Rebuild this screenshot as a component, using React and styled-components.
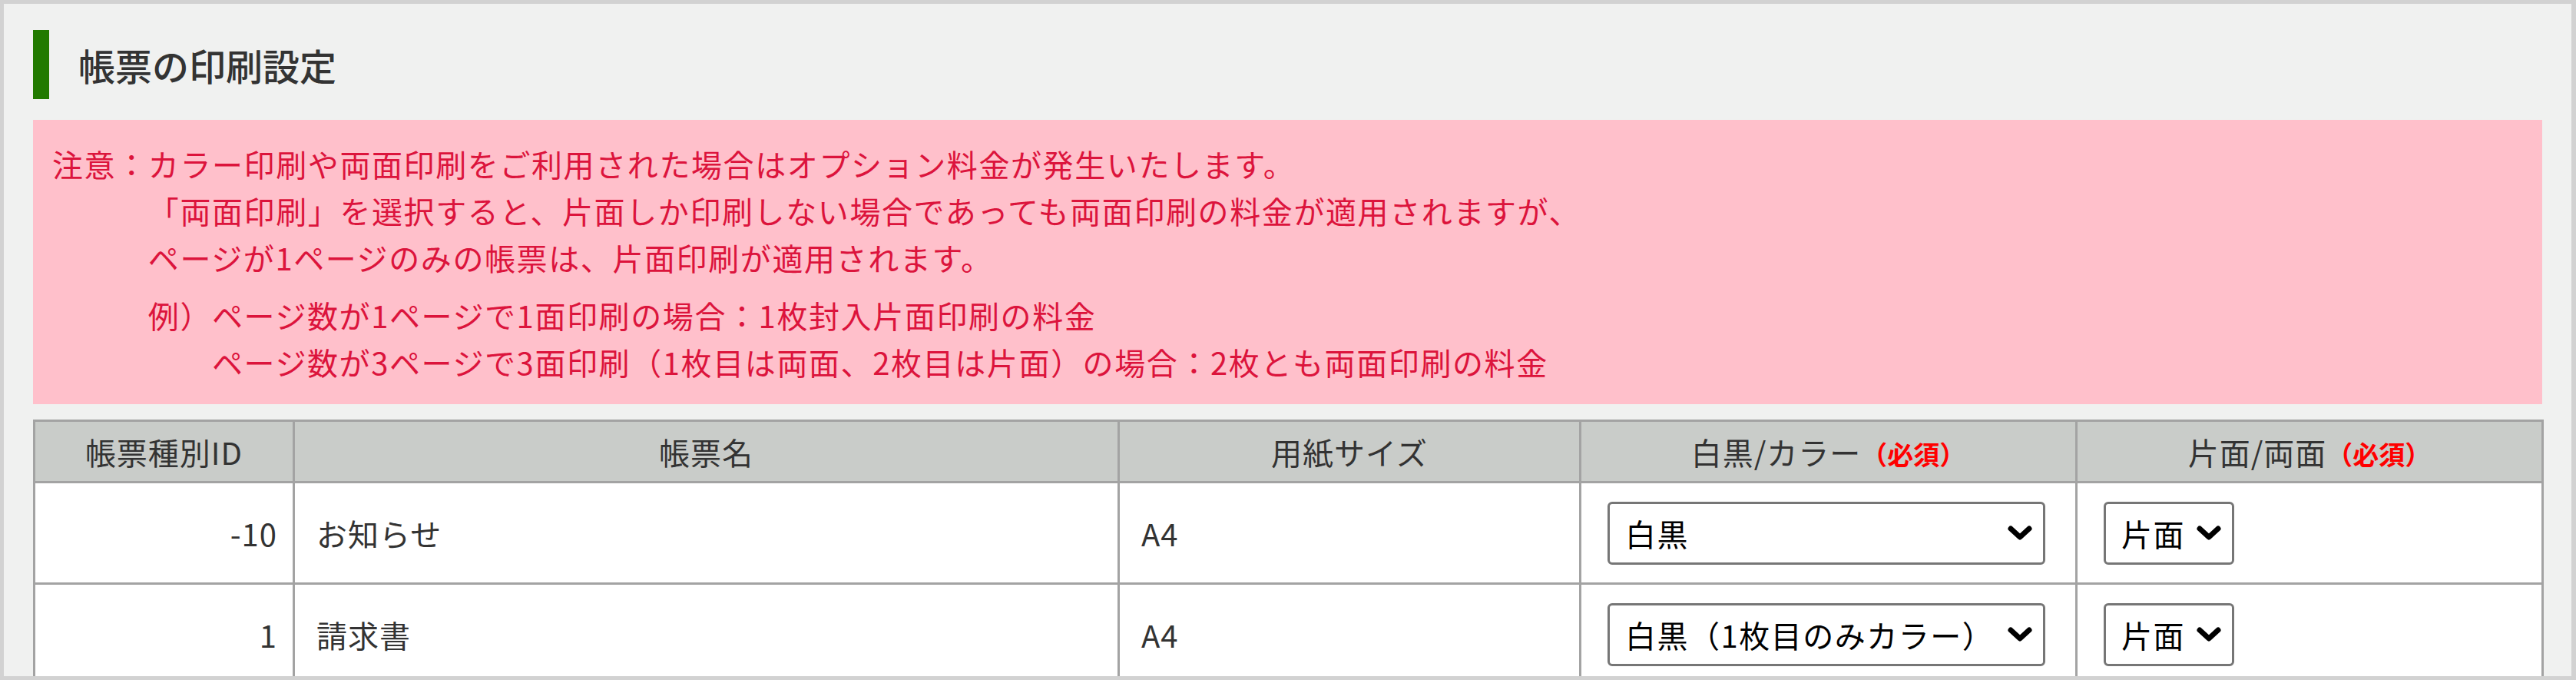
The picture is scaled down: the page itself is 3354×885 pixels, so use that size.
import React from "react";
import styled, { createGlobalStyle } from "styled-components";

const GlobalStyle = createGlobalStyle`
  html, body {
    margin: 0;
    padding: 0;
  }
  body {
    background: #d2d2d2;
    font-family: "Noto Sans CJK JP", "Noto Sans", sans-serif;
  }
`;

const colorOptions = ["白黒", "白黒（1枚目のみカラー）", "カラー"];
const sideOptions = ["片面", "両面"];

const forms = [
  { id: -10, name: "お知らせ", size: "A4", color: "白黒", side: "片面" },
  { id: 1, name: "請求書", size: "A4", color: "白黒（1枚目のみカラー）", side: "片面" },
];

const Chevron = () => (
  <ChevronIcon width="34" height="22" viewBox="0 0 34 22">
    <polyline
      points="5,5 17,16 29,5"
      fill="none"
      stroke="#000"
      strokeWidth="7"
      strokeLinecap="round"
      strokeLinejoin="round"
    />
  </ChevronIcon>
);

const Dropdown = ({ value, options, wide }) => (
  <SelectWrap>
    <SelectBox defaultValue={value} $wide={wide}>
      {options.map((opt) => (
        <option key={opt} value={opt}>
          {opt}
        </option>
      ))}
    </SelectBox>
    <Chevron />
  </SelectWrap>
);

const App = () => {
  return (
    <>
      <GlobalStyle />
      <Frame>
        <TitleRow>
          <TitleBar />
          <TitleText>帳票の印刷設定</TitleText>
        </TitleRow>

        <Notice>
          <NoteItem>
            <NoteLabel>注意：</NoteLabel>
            <NoteBody>
              <div>カラー印刷や両面印刷をご利用された場合はオプション料金が発生いたします。</div>
              <div>「両面印刷」を選択すると、片面しか印刷しない場合であっても両面印刷の料金が適用されますが、</div>
              <div>ページが1ページのみの帳票は、片面印刷が適用されます。</div>
              <ExampleItem>
                <NoteLabel>例）</NoteLabel>
                <NoteBody>
                  <div>ページ数が1ページで1面印刷の場合：1枚封入片面印刷の料金</div>
                  <div>ページ数が3ページで3面印刷（1枚目は両面、2枚目は片面）の場合：2枚とも両面印刷の料金</div>
                </NoteBody>
              </ExampleItem>
            </NoteBody>
          </NoteItem>
        </Notice>

        <Table>
          <colgroup>
            <col style={{ width: 338 }} />
            <col style={{ width: 1074 }} />
            <col style={{ width: 601 }} />
            <col style={{ width: 646 }} />
            <col style={{ width: 607 }} />
          </colgroup>
          <thead>
            <tr>
              <Th>帳票種別ID</Th>
              <Th>帳票名</Th>
              <Th>用紙サイズ</Th>
              <Th>
                白黒/カラー<Required>（必須）</Required>
              </Th>
              <Th>
                片面/両面<Required>（必須）</Required>
              </Th>
            </tr>
          </thead>
          <tbody>
            {forms.map((form) => (
              <tr key={form.id}>
                <Td $align="right">{form.id}</Td>
                <Td>{form.name}</Td>
                <Td>{form.size}</Td>
                <Td $control>
                  <Dropdown value={form.color} options={colorOptions} wide />
                </Td>
                <Td $control>
                  <Dropdown value={form.side} options={sideOptions} />
                </Td>
              </tr>
            ))}
          </tbody>
        </Table>
      </Frame>
    </>
  );
};

export default App;

const Frame = styled.div`
  box-sizing: border-box;
  height: 885px;
  overflow: hidden;
  border: 5px solid #d2d2d2;
  border-right-width: 6px;
  background: #f0f1f0;
  padding: 34px 38px 0 38px;
`;

const TitleRow = styled.div`
  display: flex;
  align-items: center;
  gap: 38px;
  height: 90px;
`;

const TitleBar = styled.div`
  width: 21px;
  height: 90px;
  background: #217a00;
`;

const TitleText = styled.h2`
  margin: 0;
  font-size: 48px;
  font-weight: 500;
  line-height: 1;
  color: #333;
`;

const Notice = styled.div`
  margin-top: 27px;
  background: pink;
  color: #dc143c;
  padding: 27px 25px 24px;
  font-size: 40px;
  line-height: 61px;
  letter-spacing: 1.6px;
`;

const NoteItem = styled.div`
  display: flex;
`;

const ExampleItem = styled.div`
  display: flex;
  margin-top: 14px;
`;

const NoteLabel = styled.div`
  flex: none;
  white-space: nowrap;
`;

const NoteBody = styled.div`
  flex: 1;
`;

const Table = styled.table`
  margin-top: 20px;
  width: 100%;
  border-collapse: collapse;
  table-layout: fixed;
  background: #fff;
  border: 3px solid #a3a3a3;
`;

const Th = styled.th`
  height: 77px;
  padding: 0;
  background: #c9ccc9;
  border: 3px solid #a3a3a3;
  color: #333;
  font-size: 40px;
  font-weight: normal;
  letter-spacing: 1px;
  text-align: center;
  white-space: nowrap;
`;

const Required = styled.span`
  color: #f00;
  font-size: 34px;
  font-weight: bold;
  letter-spacing: 0;
`;

const Td = styled.td`
  height: 129px;
  padding: ${(p) => (p.$control ? "0 34px" : p.$align === "right" ? "0 20px" : "0 28px")};
  border: 3px solid #a3a3a3;
  color: #333;
  font-size: 40px;
  letter-spacing: 1px;
  text-align: ${(p) => p.$align || "left"};
  vertical-align: middle;
  white-space: nowrap;
`;

const SelectWrap = styled.div`
  position: relative;
  display: inline-block;
  vertical-align: middle;
`;

const SelectBox = styled.select`
  appearance: none;
  -webkit-appearance: none;
  box-sizing: border-box;
  width: ${(p) => (p.$wide ? "570px" : "170px")};
  height: 82px;
  padding: 0 60px 0 20px;
  border: 3px solid #767676;
  border-radius: 6px;
  background: #fff;
  color: #000;
  font-family: inherit;
  font-size: 40px;
  letter-spacing: 1.5px;
  outline: none;
`;

const ChevronIcon = styled.svg`
  position: absolute;
  right: 16px;
  top: 50%;
  transform: translateY(-50%);
  pointer-events: none;
`;
